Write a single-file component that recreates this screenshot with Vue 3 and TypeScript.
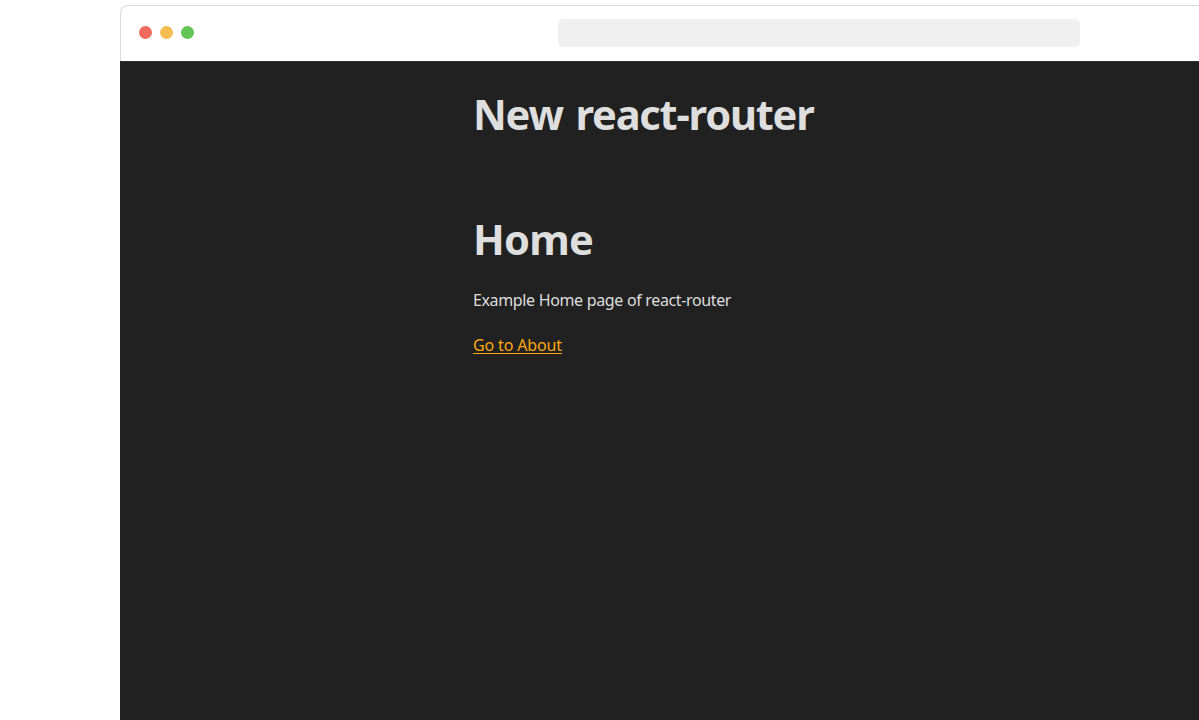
<script setup lang="ts">
const lights: string[] = ['red', 'amber', 'green']
</script>

<template>
  <div class="stage">
    <div class="window">
      <header class="bar">
        <div class="lights">
          <span v-for="l in lights" :key="l" class="light" :class="l"></span>
        </div>
        <div class="address"></div>
      </header>
      <main class="page">
        <h1>New react-router</h1>
        <h1 class="second">Home</h1>
        <p class="copy">Example Home page of react-router</p>
        <p class="link"><a href="#">Go to About</a></p>
      </main>
    </div>
  </div>
</template>

<style>
body {
  margin: 0;
  background: #fff;
  overflow: hidden;
}
</style>

<style scoped>
.stage {
  box-sizing: border-box;
  height: 720px;
  padding: 5px 0 0 120px;
  overflow: hidden;
}
.window {
  width: 1400px;
  height: 715px;
}
.bar {
  box-sizing: border-box;
  height: 56px;
  border: 1px solid #dadada;
  border-bottom: 0;
  border-radius: 8px 0 0 0;
  display: flex;
  padding: 13px 0 0 18px;
}
.lights {
  display: flex;
  gap: 8px;
  width: 419px;
  padding-top: 7px;
}
.light {
  width: 13px;
  height: 13px;
  border-radius: 50%;
}
.red { background: #ee6a5f; }
.amber { background: #f5bd4f; }
.green { background: #61c454; }
.address {
  width: 522px;
  height: 28px;
  border-radius: 5px;
  background: #f0f0f0;
}
.page {
  box-sizing: border-box;
  height: 659px;
  padding: 22px 0 0 353px;
  border-top: 1px solid #2e2e2e;
  background: #212121;
  color: #dedede;
  font-family: "Noto Sans", "Open Sans", sans-serif;
}
h1 {
  margin: 0;
  height: 60px;
  font: 700 41.6px/60px "Noto Sans", sans-serif;
  letter-spacing: -1.2px;
  word-spacing: 3px;
  white-space: nowrap;
}
.second {
  margin-top: 65px;
  letter-spacing: -0.8px;
}
p {
  margin: 18px 0 0;
  height: 27px;
  font-size: 16px;
  line-height: 27px;
}
.copy {
  letter-spacing: -0.37px;
  word-spacing: 0.2px;
}
.link {
  letter-spacing: -0.14px;
}
a {
  color: #ffa812;
  text-underline-offset: 2px;
}
</style>
